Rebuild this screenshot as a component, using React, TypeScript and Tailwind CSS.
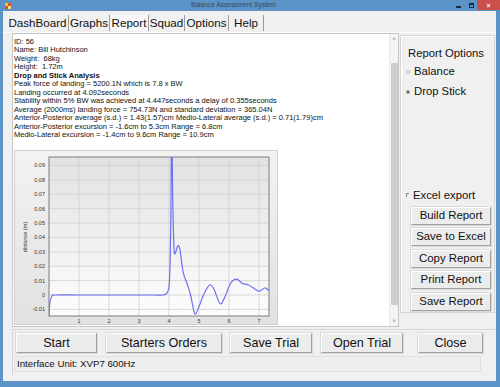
import React from 'react'

type Pt = [number, number]

// chart data: time (s) vs distance (m)
const data: Pt[] = [
  [0, -0.014], [0.03, -0.005], [0.1, -0.0007], [0.2, 0], [1, 0], [2, 0], [3, 0], [3.5, 0],
  [3.8, 0], [3.9, 0.0008], [3.97, 0.003], [4.02, 0.012], [4.06, 0.05], [4.09, 0.115],
  [4.13, 0.06], [4.17, 0.032], [4.21, 0.029], [4.29, 0.034], [4.36, 0.032], [4.47, 0.016],
  [4.6, 0.008], [4.72, 0], [4.86, -0.013], [5.0, -0.008], [5.15, 0], [5.35, 0.007],
  [5.5, 0.004], [5.7, -0.006], [5.85, -0.002], [6.05, 0.008], [6.25, 0.011], [6.45, 0.008],
  [6.65, 0.007], [6.95, 0.003], [7.05, 0.003], [7.2, 0.005], [7.33, 0.003],
]

const sx = (t: number) => 35 + 30 * t
const sy = (v: number) => 145 - 1440 * v

function smoothPath(p: Pt[]) {
  let d = `M${p[0][0]},${p[0][1]}`
  for (let i = 0; i < p.length - 1; i++) {
    const p0 = p[i - 1] || p[i]
    const p1 = p[i]
    const p2 = p[i + 1]
    const p3 = p[i + 2] || p2
    const c1x = p1[0] + (p2[0] - p0[0]) / 6
    const c1y = p1[1] + (p2[1] - p0[1]) / 6
    const c2x = p2[0] - (p3[0] - p1[0]) / 6
    const c2y = p2[1] - (p3[1] - p1[1]) / 6
    d += ` C${c1x.toFixed(2)},${c1y.toFixed(2)} ${c2x.toFixed(2)},${c2y.toFixed(2)} ${p2[0].toFixed(2)},${p2[1].toFixed(2)}`
  }
  return d
}

function Chart() {
  const yTicks = [-0.01, 0, 0.01, 0.02, 0.03, 0.04, 0.05, 0.06, 0.07, 0.08, 0.09]
  const xTicks = [1, 2, 3, 4, 5, 6, 7]
  const path = smoothPath(data.map(([t, v]) => [sx(t), sy(v)] as Pt))
  return (
    <svg width="264" height="175" viewBox="0 0 264 175" className="block">
      <defs>
        <linearGradient id="outer" x1="0" y1="0" x2="0" y2="1">
          <stop offset="0" stopColor="#f2f2f2" />
          <stop offset="1" stopColor="#e2e2e2" />
        </linearGradient>
        <linearGradient id="plot" x1="0" y1="0" x2="0" y2="1">
          <stop offset="0" stopColor="#e2e2e2" />
          <stop offset="1" stopColor="#fdfdfd" />
        </linearGradient>
        <clipPath id="clip">
          <rect x="35" y="7" width="220" height="159" />
        </clipPath>
      </defs>
      <rect x="0.5" y="0.5" width="263" height="174" fill="url(#outer)" stroke="#cfcfcf" />
      <rect x="35" y="7" width="220" height="159" fill="url(#plot)" />
      {xTicks.map((t) => (
        <line key={t} x1={sx(t)} x2={sx(t)} y1="7" y2="166" stroke="#cfcfcf" strokeWidth="0.8" />
      ))}
      {yTicks.map((v) => (
        <line key={v} x1="35" x2="255" y1={sy(v)} y2={sy(v)} stroke="#cfcfcf" strokeWidth="0.8" />
      ))}
      <rect x="35" y="7" width="220" height="159" fill="none" stroke="#7d7d7d" strokeWidth="1" />
      {yTicks.map((v) => (
        <text key={v} x="31" y={sy(v) + 2} fontSize="5.5" textAnchor="end" fill="#333" fontFamily="Liberation Sans, Arial, sans-serif">
          {v === 0 ? '0' : v.toFixed(2)}
        </text>
      ))}
      {xTicks.map((t) => (
        <text key={t} x={sx(t)} y="173" fontSize="5.5" textAnchor="middle" fill="#333" fontFamily="Liberation Sans, Arial, sans-serif">
          {t}
        </text>
      ))}
      <text x="0" y="0" fontSize="5.5" fill="#333" textAnchor="middle" fontFamily="Liberation Sans, Arial, sans-serif" transform="translate(13 87) rotate(-90)">
        distance (m)
      </text>
      <path d={path} fill="none" stroke="#6f6ff2" strokeWidth="1.2" clipPath="url(#clip)" strokeLinejoin="round" />
    </svg>
  )
}

function WinButton({ label, className }: { label: string; className: string }) {
  return (
    <button
      className={`flex items-center justify-center bg-[#ececec] border border-t-white border-l-white border-b-[#a0a0a0] border-r-[#a0a0a0] shadow-[0_0_0_1px_#dadada] text-[#111] ${className}`}
    >
      {label}
    </button>
  )
}

export default function App() {
  const tabs = [
    { name: 'DashBoard', w: 'w-[62px]' },
    { name: 'Graphs', w: 'w-[41px]' },
    { name: 'Report', w: 'w-[39px]' },
    { name: 'Squad', w: 'w-[36px]' },
    { name: 'Options', w: 'w-[44px]' },
    { name: 'Help', w: 'w-[35px]' },
  ]

  const lines = [
    'ID: 56',
    'Name: Bill Hutchinson',
    'Weight:  68kg',
    'Height:  1.72m',
  ]
  const analysis = [
    'Peak force of landing = 5200.1N which is 7.8 x BW',
    'Landing occurred at 4.092seconds',
    'Stability within 5% BW was achieved at 4.447seconds a delay of 0.355seconds',
    'Average (2000ms) landing force = 754.73N and standard deviation = 365.04N',
    'Anterior-Posterior average (s.d.) = 1.43(1.57)cm Medio-Lateral average (s.d.) = 0.71(1.79)cm',
    'Anterior-Posterior excursion = -1.6cm to 5.3cm Range = 6.8cm',
    'Medio-Lateral excursion = -1.4cm to 9.6cm Range = 10.9cm',
  ]

  return (
    <div className="w-[500px] h-[387px] bg-[#5b93c6] flex flex-col pl-[3px] pr-[4px] pb-[6px] font-['Liberation_Sans',Arial,sans-serif] overflow-hidden">
      {/* Title bar */}
      <div className="h-[11px] flex items-center relative">
        <div className="ml-[2px] w-[6px] h-[6px] grid grid-cols-2">
          <span className="bg-[#f2c230]" />
          <span className="bg-[#e34b2c]" />
          <span className="bg-[#e34b2c]" />
          <span className="bg-[#f5e27a]" />
        </div>
        <div className="flex-1 text-center text-[6.6px] text-[#3a4a5a] leading-none">Balance Assessment System</div>
        <div className="flex items-start h-full mr-[-4px]">
          <div className="w-[5px] h-[1.5px] bg-[#1e2a36] mt-[6px] mr-[8px]" />
          <div className="w-[5px] h-[5px] border border-t-2 border-[#1e2a36] mt-[3px] mr-[3px]" />
          <div className="w-[23px] h-[10px] bg-[#c9504b] flex items-center justify-center text-white text-[7px] font-bold leading-none">
            ×
          </div>
        </div>
      </div>

      {/* Body */}
      <div className="flex-1 bg-[#f0f0f0] flex flex-col">
        {/* Tabs */}
        <div className="h-[22px] flex items-start pt-[4px] pl-[4px] border-b border-[#fbfbfb]">
          {tabs.map((t) => (
            <div
              key={t.name}
              className={`${t.w} h-[16px] flex items-center justify-center border-r border-[#9a9a9a] text-[11.6px] leading-none text-[#111] ${t.name === 'Report' ? 'bg-[#f7f7f7]' : ''}`}
            >
              {t.name}
            </div>
          ))}
        </div>

        {/* Main area */}
        <div className="h-[296px] flex">
          {/* Report text box */}
          <div className="ml-[9px] w-[387px] h-[294px] border border-[#c6c6c6] bg-white flex">
            <div className="flex-1 pl-[1px] pt-[3.5px] text-[7.5px] leading-[8.5px] text-[#111] overflow-hidden whitespace-nowrap">
              {lines.map((l) => (
                <div key={l} className="whitespace-pre">{l}</div>
              ))}
              <div className="font-bold">Drop and Stick Analysis</div>
              {analysis.map((l) => (
                <div key={l}>{l}</div>
              ))}
              <div className="mt-[10px]">
                <Chart />
              </div>
            </div>
            {/* Scrollbar */}
            <div className="w-[9px] h-full bg-[#f4f4f4] border-l border-[#ececec] flex flex-col items-center">
              <div className="h-[10px] flex items-center justify-center text-[6px] text-[#777] leading-none">˄</div>
              <div className="h-[19px]" />
              <div className="w-[7px] h-[242px] bg-[#cdcdcd]" />
              <div className="flex-1" />
              <div className="h-[10px] flex items-center justify-center text-[6px] text-[#777] leading-none">˅</div>
            </div>
          </div>

          {/* Report Options group */}
          <div className="ml-[1px] mt-[2px] w-[95px] h-[278px] border border-[#d6d6d6] shadow-[inset_1px_1px_0_#fff] flex flex-col text-[11.3px] leading-[13px] text-[#111]">
            <div className="pl-[7px] mt-[10.5px]">Report Options</div>
            <div className="flex items-center mt-[5.5px] pl-[5px]">
              <span className="w-[4px] h-[4px] rounded-full border border-[#b8b8b8] bg-white" />
              <span className="ml-[4px]">Balance</span>
            </div>
            <div className="flex items-center mt-[7px] pl-[5px]">
              <span className="w-[4px] h-[4px] rounded-full border border-[#9a9a9a] bg-[#6a6a6a]" />
              <span className="ml-[4px]">Drop Stick</span>
            </div>
            <div className="flex items-center mt-[90.5px] pl-[5px]">
              <span className="w-[3px] h-[4px] border-l border-t border-[#8a8a8a]" />
              <span className="ml-[4px]">Excel export</span>
            </div>
            <div className="flex flex-col gap-[3.5px] mt-[5px] ml-[10px]">
              {['Build Report', 'Save to Excel', 'Copy Report', 'Print Report', 'Save Report'].map((b) => (
                <WinButton key={b} label={b} className="w-[80px] h-[18px] text-[11.4px] leading-none" />
              ))}
            </div>
          </div>
        </div>

        {/* Bottom panel */}
        <div className="ml-[9px] w-[484px] h-[47px] border-t border-l border-[#d6d6d6] flex flex-col">
          <div className="flex items-center pt-[3px] text-[12.6px] leading-none">
            <WinButton label="Start" className="ml-[3px] w-[81px] h-[20px]" />
            <WinButton label="Starters Orders" className="ml-[9px] w-[116px] h-[20px]" />
            <WinButton label="Save Trial" className="ml-[8px] w-[82px] h-[20px]" />
            <WinButton label="Open Trial" className="ml-[9px] w-[82px] h-[20px]" />
            <WinButton label="Close" className="ml-[15px] w-[65px] h-[20px]" />
          </div>
          <div className="mt-[3px] ml-[1px] w-[467px] h-[16px] border border-[#e2e2e2] bg-[#eeeeee] flex items-center pl-[2px] text-[9.7px] leading-none text-[#111]">
            Interface Unit: XVP7 600Hz
          </div>
        </div>
      </div>
    </div>
  )
}
